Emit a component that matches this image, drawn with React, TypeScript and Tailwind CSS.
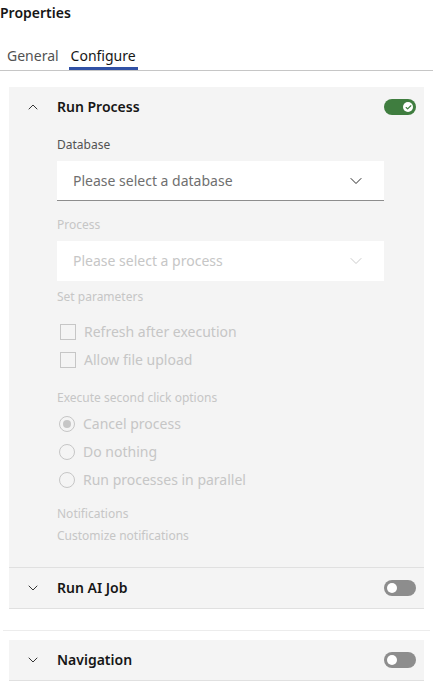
import { Check, ChevronDown, ChevronUp } from 'lucide-react'

const FONT = { fontFamily: '"Noto Sans", Inter, sans-serif' }

function Toggle({ on }: { on: boolean }) {
  return (
    <div className={`relative w-8 h-4 rounded-full ${on ? 'bg-[#3f7d3f]' : 'bg-[#8d8d8d]'}`}>
      <div
        className={`absolute top-[3px] w-[10px] h-[10px] rounded-full bg-white flex items-center justify-center ${on ? 'right-[3px]' : 'left-[3px]'}`}
      >
        {on && <Check size={7} strokeWidth={4} className="text-[#3f7d3f]" />}
      </div>
    </div>
  )
}

function Header({ title, open, on }: { title: string; open: boolean; on: boolean }) {
  return (
    <div className="flex items-center h-10 pl-[16px] pr-2">
      {open ? (
        <ChevronUp size={16} strokeWidth={1.3} className="text-[#161616]" />
      ) : (
        <ChevronDown size={16} strokeWidth={1.3} className="text-[#161616]" />
      )}
      <span className="ml-4 text-sm font-semibold text-[#161616]">{title}</span>
      <div className="ml-auto">
        <Toggle on={on} />
      </div>
    </div>
  )
}

function Checkbox({ label }: { label: string }) {
  return (
    <div className="flex items-center h-7 pl-[3px]">
      <div className="w-4 h-4 border border-[#c6c6c6]" />
      <span className="ml-2 text-sm text-[#c6c6c6]">{label}</span>
    </div>
  )
}

function Radio({ label, checked }: { label: string; checked?: boolean }) {
  return (
    <div className="flex items-center h-7 pl-[2px]">
      <div className="w-4 h-4 rounded-full border border-[#c6c6c6] flex items-center justify-center">
        {checked && <div className="w-2 h-2 rounded-full bg-[#c6c6c6]" />}
      </div>
      <span className="ml-2 text-sm text-[#c6c6c6]">{label}</span>
    </div>
  )
}

export default function App() {
  return (
    <div className="w-[433px] h-[686px] bg-white overflow-hidden" style={FONT}>
      <div className="pt-[4px] text-sm font-semibold text-[#161616] leading-[18px]">Properties</div>

      <div className="mt-[24px] flex border-b border-[#c6c6c6] text-sm">
        <div className="px-[7px] pb-[4px] text-[#525252]">General</div>
        <div className="ml-[3px] px-[2px] pb-[1px] text-[#161616] border-b-[3px] border-[#3151a5]">Configure</div>
      </div>

      <div className="mx-[9px] mt-[16px] bg-[#f4f4f4]">
        <Header title="Run Process" open on />
        <div className="pl-[48px] pr-[40px] pb-[23px]">
          <div className="mt-[10px] text-xs text-[#525252] leading-4">Database</div>
          <div className="mt-[8px] h-10 bg-white border-b border-[#8d8d8d] flex items-center pl-4 pr-[18px]">
            <span className="text-sm text-[#6f6f6f]">Please select a database</span>
            <ChevronDown size={20} strokeWidth={1.1} className="ml-auto text-[#161616]" />
          </div>

          <div className="mt-[16px] text-xs text-[#c6c6c6] leading-4">Process</div>
          <div className="mt-2 h-10 bg-white flex items-center pl-4 pr-[18px]">
            <span className="text-sm text-[#c6c6c6]">Please select a process</span>
            <ChevronDown size={20} strokeWidth={1.1} className="ml-auto text-[#c6c6c6]" />
          </div>

          <div className="mt-[8px] text-xs text-[#c6c6c6] leading-4">Set parameters</div>
          <div className="mt-[13px]">
            <Checkbox label="Refresh after execution" />
            <Checkbox label="Allow file upload" />
          </div>

          <div className="mt-[16px] text-xs text-[#c6c6c6] leading-4">Execute second click options</div>
          <div className="mt-[4px]">
            <Radio label="Cancel process" checked />
            <Radio label="Do nothing" />
            <Radio label="Run processes in parallel" />
          </div>

          <div className="mt-[12px] text-xs text-[#c6c6c6] leading-4">Notifications</div>
          <div className="mt-[6px] text-xs text-[#c6c6c6] leading-4">Customize notifications</div>
        </div>
        <div className="border-t border-[#e0e0e0]" />
        <Header title="Run AI Job" open={false} on={false} />
        <div className="border-t border-[#e0e0e0]" />
      </div>

      <div className="mt-[21px] mx-[3px] border-t border-[#ececec]" />

      <div className="mx-[9px] mt-[9px] bg-[#f4f4f4]">
        <Header title="Navigation" open={false} on={false} />
        <div className="border-t border-[#e0e0e0]" />
      </div>
    </div>
  )
}
